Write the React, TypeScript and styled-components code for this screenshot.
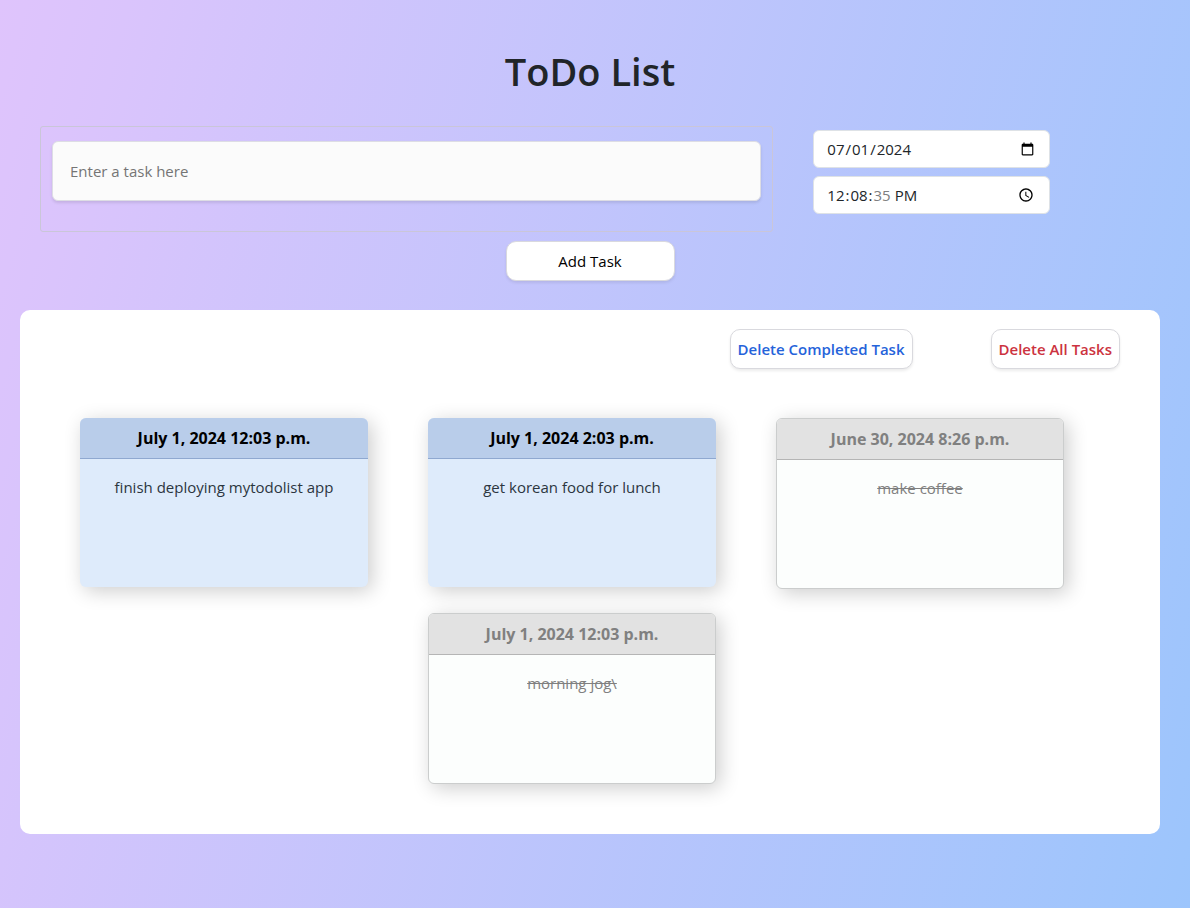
import React from "react";
import styled, { createGlobalStyle, css } from "styled-components";

const GlobalStyle = createGlobalStyle`
  *, *::before, *::after { box-sizing: border-box; }
  body {
    margin: 0;
    color: #212529;
    font-family: "Segoe UI", "Open Sans", "Noto Sans", sans-serif;
    font-size: 15px;
    line-height: 24px;
  }
`;

const Page = styled.main`
  min-height: 100vh;
  padding: 47px 30px 74px 20px;
  background: linear-gradient(105deg, #dfc4fc 0%, #dac4fc 9%, #9cc5fc 100%);
`;

const Title = styled.h1`
  margin: 0 0 31px;
  font-size: 38px;
  font-weight: 600;
  line-height: 48px;
  text-align: center;
`;

const TaskForm = styled.form`
  padding: 0 20px;
`;

const FormColumns = styled.div`
  display: grid;
  grid-template-columns: 2fr 1fr;
`;

const TaskField = styled.div`
  padding: 14px 11px 30px;
  border: 1px solid #cac6d8;
  border-radius: 3px;
`;

const TaskInput = styled.input`
  display: block;
  width: 100%;
  height: 60px;
  padding: 0 17px;
  border: 1px solid #dddde4;
  border-radius: 6px;
  background: #fbfbfb;
  box-shadow: 0 2px 3px rgba(0, 0, 0, 0.1);
  color: inherit;
  font: inherit;
  &::placeholder { color: #757575; opacity: 1; }
`;

const WhenFields = styled.div`
  display: flex;
  flex-direction: column;
  gap: 8px;
  padding: 4px 90px 0 40px;
`;

const WhenInput = styled.input`
  width: 100%;
  height: 38px;
  padding: 6px 12px;
  border: 1px solid #dee2e6;
  border-radius: 6px;
  background: #fff;
  color: #212529;
  font: inherit;
  &::-webkit-datetime-edit-second-field { color: #808080; }
`;

const FormActions = styled.div`
  display: flex;
  justify-content: center;
  padding: 9px 0 29px;
`;

const buttonColors = { plain: "#000", primary: "#2563da", danger: "#cc3340" };

const Button = styled.button<{ $tone: keyof typeof buttonColors; $wide?: boolean }>`
  height: 40px;
  min-width: ${({ $wide }) => ($wide ? "169px" : "0")};
  padding: 0 7px;
  border: 1px solid #d9d9de;
  border-radius: 10px;
  background: #fff;
  box-shadow: 0 2px 3px rgba(0, 0, 0, 0.08);
  color: ${({ $tone }) => buttonColors[$tone]};
  font: inherit;
  font-weight: ${({ $tone }) => ($tone === "plain" ? 400 : 600)};
  cursor: pointer;
`;

const Panel = styled.section`
  padding: 19px 40px 50px 24px;
  border-radius: 10px;
  background: #fff;
`;

const PanelActions = styled.div`
  display: flex;
  justify-content: flex-end;
  gap: 78px;
  margin-bottom: 49px;
`;

const TaskList = styled.ul`
  display: flex;
  flex-wrap: wrap;
  justify-content: center;
  align-items: flex-start;
  gap: 24px 60px;
  margin: 0;
  padding: 0 20px 0 0;
  list-style: none;
`;

const TaskDate = styled.h2`
  margin: 0;
  padding: 8px 16px;
  border-bottom: 1px solid #8fa8d0;
  background: #b9cdea;
  color: #000;
  font-size: 16px;
  font-weight: 700;
  line-height: 24px;
  text-align: center;
`;

const TaskText = styled.p`
  margin: 0;
  padding: 16px;
  color: #2c363f;
  text-align: center;
`;

const Card = styled.li<{ $done: boolean }>`
  width: 288px;
  min-height: 169px;
  overflow: hidden;
  border-radius: 6px;
  background: #deebfb;
  box-shadow: 4px 4px 20px rgba(0, 0, 0, 0.2);
  ${({ $done }) => $done && css`
    min-height: 171px;
    border: 1px solid #cbcdcd;
    background: #fcfefd;
    ${TaskDate} {
      border-color: #b5b5b5;
      background: #e2e2e2;
      color: #808080;
    }
    ${TaskText} {
      color: #808080;
      text-decoration: line-through;
    }
  `}
`;

const tasks = [
  { due: "July 1, 2024 12:03 p.m.", text: "finish deploying mytodolist app", done: false },
  { due: "July 1, 2024 2:03 p.m.", text: "get korean food for lunch", done: false },
  { due: "June 30, 2024 8:26 p.m.", text: "make coffee", done: true },
  { due: "July 1, 2024 12:03 p.m.", text: "morning jog\\", done: true },
];

export default function App() {
  return (
    <>
      <GlobalStyle />
      <Page>
        <Title>ToDo List</Title>
        <TaskForm onSubmit={(event) => event.preventDefault()}>
          <FormColumns>
            <TaskField>
              <TaskInput type="text" aria-label="Task" placeholder="Enter a task here" />
            </TaskField>
            <WhenFields>
              <WhenInput type="date" aria-label="Due date" defaultValue="2024-07-01" />
              <WhenInput type="time" aria-label="Due time" defaultValue="12:08:35" />
            </WhenFields>
          </FormColumns>
          <FormActions>
            <Button type="submit" $tone="plain" $wide>Add Task</Button>
          </FormActions>
        </TaskForm>
        <Panel aria-label="Tasks">
          <PanelActions>
            <Button type="button" $tone="primary">Delete Completed Task</Button>
            <Button type="button" $tone="danger">Delete All Tasks</Button>
          </PanelActions>
          <TaskList>
            {tasks.map((task) => (
              <Card key={task.text} $done={task.done}>
                <TaskDate>{task.due}</TaskDate>
                <TaskText>{task.text}</TaskText>
              </Card>
            ))}
          </TaskList>
        </Panel>
      </Page>
    </>
  );
}
